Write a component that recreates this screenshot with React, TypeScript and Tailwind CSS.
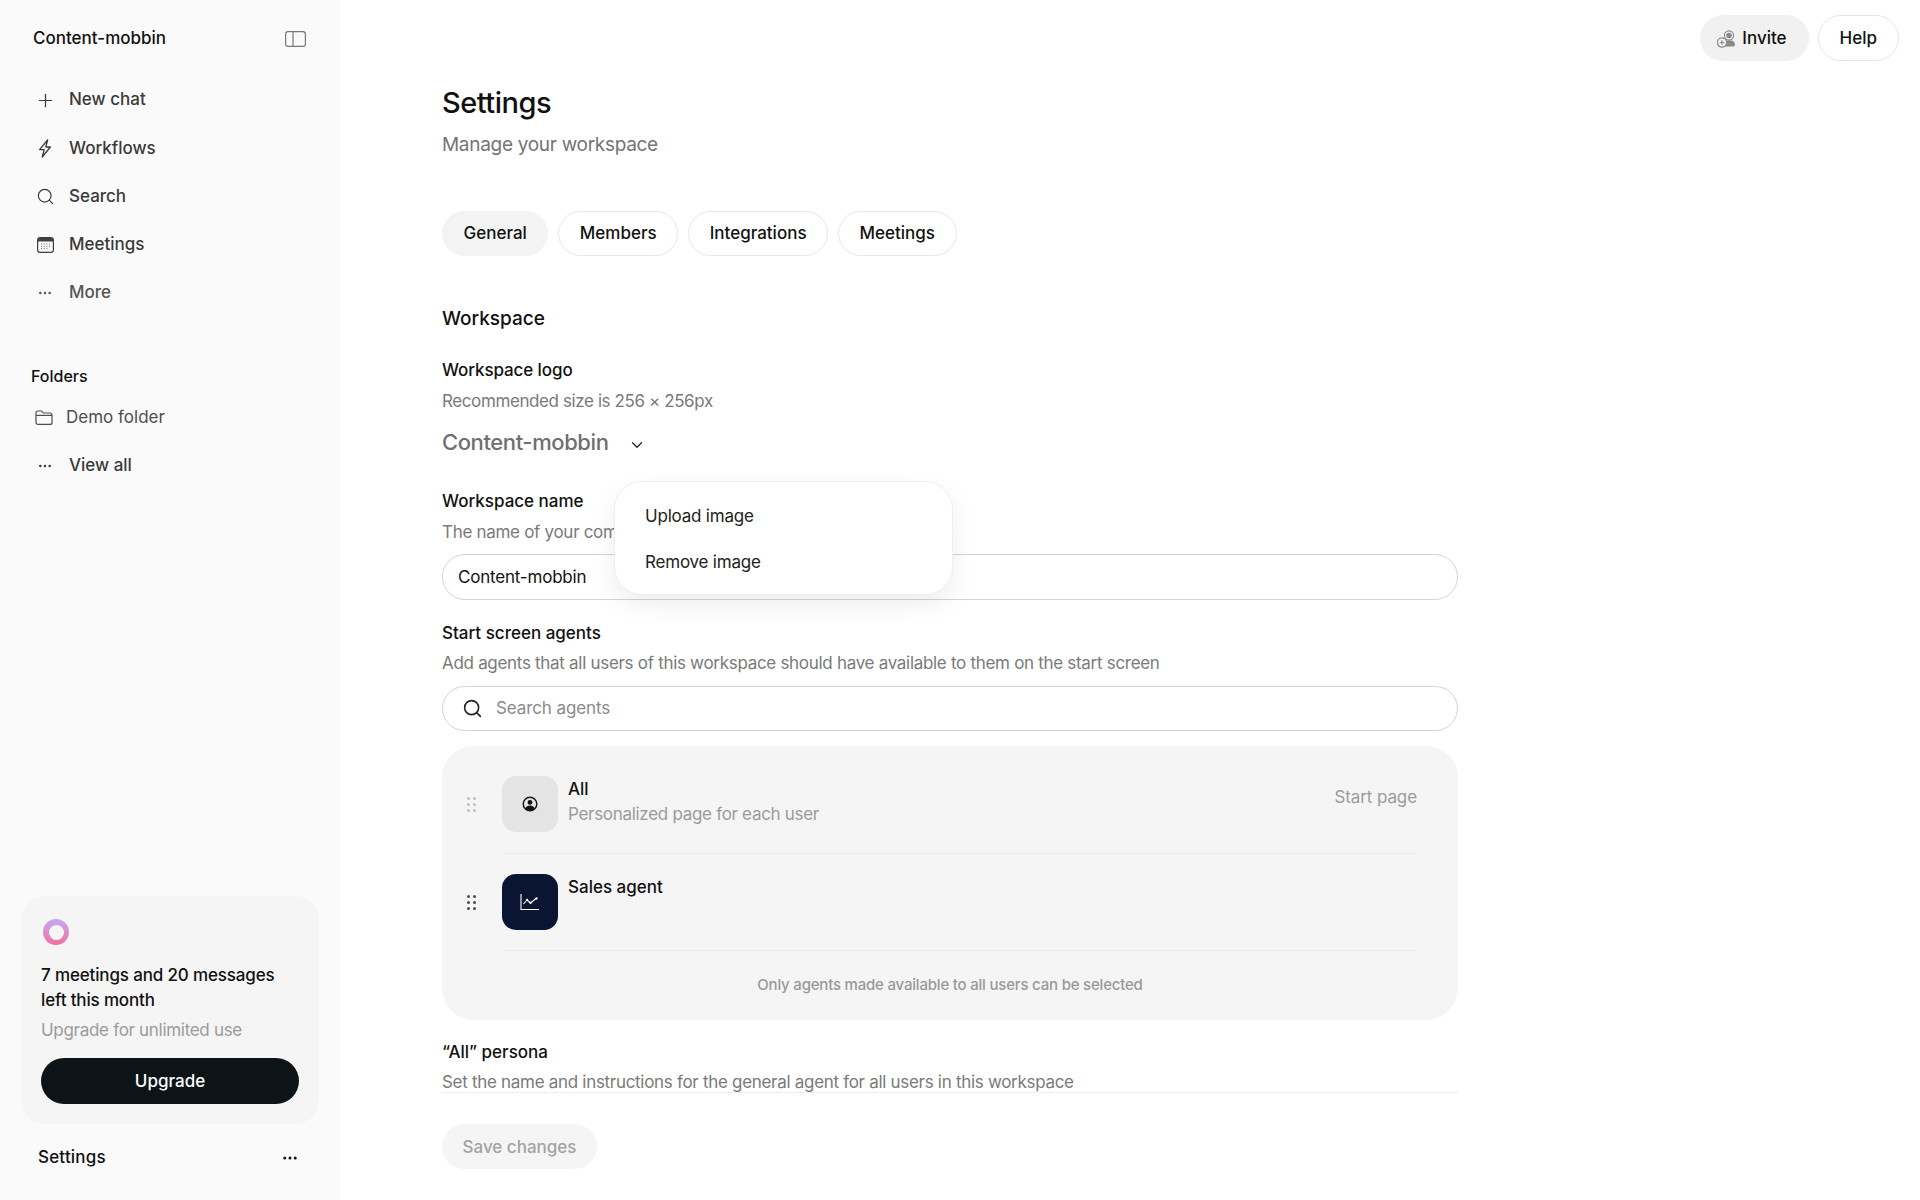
import { useState } from 'react';
import { ChevronDown, Ellipsis, Plus, Search } from 'lucide-react';

const tabs = ['General', 'Members', 'Integrations', 'Meetings'];

function PanelIcon() {
  return (
    <svg width="21" height="16" viewBox="0 0 21 16" fill="none" stroke="#777" strokeWidth="1.2">
      <rect x="0.6" y="0.6" width="19.8" height="14.8" rx="2.4" />
      <path d="M8 0.6v14.8" />
    </svg>
  );
}

function BoltIcon() {
  return (
    <svg width="14" height="19" viewBox="0 0 14 19" fill="none" stroke="#3a3a3a" strokeWidth="1.3" strokeLinejoin="round">
      <path d="M9.6 1 1.6 10.6h4.6L4.2 18l8.2-10H7.8z" />
    </svg>
  );
}

function FolderIcon() {
  return (
    <svg width="18" height="15" viewBox="0 0 18 15" fill="none" stroke="#4d4d4d" strokeWidth="1.2" strokeLinejoin="round">
      <path d="M1 3a2 2 0 0 1 2-2h3.6l1.6 2H15a2 2 0 0 1 2 2v7.4a2 2 0 0 1-2 2H3a2 2 0 0 1-2-2z" />
      <path d="M1 5.4h16" />
    </svg>
  );
}

function CalendarIcon() {
  return (
    <svg width="17" height="16" viewBox="0 0 17 16" fill="none">
      <rect x="0.6" y="0.6" width="15.8" height="14.8" rx="2.4" stroke="#3f3f3f" strokeWidth="1.2" />
      <path d="M1 3a2 2 0 0 1 2-2h11a2 2 0 0 1 2 2v1.6H1z" fill="#3f3f3f" />
      <path
        d="M4 7h1M6.7 7h1M9.4 7h1M12.1 7h1M4 9.3h1M6.7 9.3h1M9.4 9.3h1M12.1 9.3h1M4 11.6h1M6.7 11.6h1M9.4 11.6h1"
        stroke="#6b6b6b"
        strokeWidth="1"
      />
    </svg>
  );
}

function InviteIcon() {
  return (
    <svg width="20" height="18" viewBox="0 0 20 18" fill="none">
      <circle cx="12" cy="5.5" r="4.6" stroke="#8a8a8a" strokeWidth="1.1" />
      <circle cx="12" cy="5.5" r="2.8" fill="#8a8a8a" />
      <path d="M7 16c0-3.4 2.2-5.6 5-5.6h1.6c2.8 0 4.4 2 4.4 4.4 0 1.2-.8 1.8-2 1.8H8z" fill="#8a8a8a" />
      <circle cx="5" cy="12.5" r="4.6" fill="#f1f1f1" stroke="#8a8a8a" strokeWidth="1.2" />
      <path d="M5 10.2v4.6M2.7 12.5h4.6" stroke="#8a8a8a" strokeWidth="1.2" />
    </svg>
  );
}

function DragDots({ light }: { light?: boolean }) {
  return (
    <div className={`grid grid-cols-2 gap-x-[3px] gap-y-[3px] ${light ? 'opacity-25' : 'opacity-80'}`}>
      {[0, 1, 2, 3, 4, 5].map((i) => (
        <span key={i} className="w-[3px] h-[3px] rounded-full bg-[#222]" />
      ))}
    </div>
  );
}

function NavItem({ icon, label, muted }: { icon: React.ReactNode; label: string; muted?: boolean }) {
  return (
    <div className={`flex items-center h-[48.2px] pl-9 ${muted ? 'text-[#555]' : 'text-[#3a3a3a]'}`}>
      <span className="w-6 flex justify-center">{icon}</span>
      <span className="ml-3 text-[17px] font-medium">{label}</span>
    </div>
  );
}

export default function App() {
  const [activeTab] = useState('General');

  return (
    <div className="flex h-[1200px] overflow-hidden bg-white text-[#111] font-['Inter',sans-serif]">
      {/* Sidebar */}
      <aside className="w-[340px] shrink-0 bg-[#fafafa] flex flex-col">
        <div className="flex items-center justify-between pl-[33px] pr-[34px] pt-[27px] h-[50px]">
          <span className="text-[17px] font-medium">Content-mobbin</span>
          <PanelIcon />
        </div>
        <nav className="mt-[26px] -ml-[3px]">
          <NavItem icon={<Plus size={21} strokeWidth={1.4} />} label="New chat" />
          <NavItem icon={<BoltIcon />} label="Workflows" />
          <NavItem icon={<Search size={19} strokeWidth={1.5} />} label="Search" />
          <NavItem icon={<CalendarIcon />} label="Meetings" />
          <NavItem icon={<Ellipsis size={16} strokeWidth={1.8} />} label="More" muted />
        </nav>
        <div className="mt-[47px] pl-[31px] text-[16px] font-medium leading-6">Folders</div>
        <div className="flex items-center h-[48px] mt-[6px] pl-[35px] text-[#4d4d4d]">
          <FolderIcon />
          <span className="ml-[13px] text-[17px]">Demo folder</span>
        </div>
        <div className="-ml-[3px]">
          <NavItem icon={<Ellipsis size={16} strokeWidth={1.8} />} label="View all" />
        </div>

        <div className="mt-auto mx-[21px] w-[298px] h-[228px] rounded-[24px] bg-[#f5f5f5] px-[20px] pt-[23px]">
          <div className="w-[26px] h-[26px] rounded-full bg-linear-to-b from-[#c4a6f5] to-[#ee6fa0] flex items-center justify-center ml-[2px]">
            <div className="w-[15px] h-[15px] rounded-full bg-[#f5f5f5]" />
          </div>
          <p className="mt-[18px] text-[17px] leading-[25px] font-medium tracking-[-0.15px]">7 meetings and 20 messages left this month</p>
          <p className="mt-[4px] text-[17px] leading-[27px] tracking-[-0.3px] text-[#9b9b9b]">Upgrade for unlimited use</p>
          <button className="mt-[14px] w-[258px] h-[46px] pt-[1px] rounded-full bg-[#0d1417] text-white text-[17px] font-medium">
            Upgrade
          </button>
        </div>
        <div className="flex items-center justify-between pl-[38px] pr-[41px] pt-[2px] h-[66px] mb-[10px]">
          <span className="text-[17px] font-medium tracking-[0.2px]">Settings</span>
          <Ellipsis size={18} strokeWidth={2} />
        </div>
      </aside>

      {/* Main */}
      <main className="relative flex-1 pl-[102px]">
        <div className="absolute top-[15px] right-[21px] flex gap-[9px]">
          <button className="flex items-center gap-[5px] h-[46px] pl-[17px] pr-[22px] pt-[2px] rounded-full bg-[#f1f1f1] text-[17px] font-medium">
            <InviteIcon />
            Invite
          </button>
          <button className="h-[46px] px-[21px] pt-[2px] rounded-full border border-[#e6e6e6] bg-white text-[17px] font-medium">
            Help
          </button>
        </div>

        <div className="w-[1016px] pt-[84px]">
          <h1 className="text-[29px] leading-[38px] font-medium tracking-[-0.5px]">Settings</h1>
          <p className="mt-[9px] text-[19px] leading-[28px] tracking-[-0.3px] text-[#737373]">Manage your workspace</p>

          <div className="mt-[52px] flex gap-[10px]">
            {tabs.map((tab) => (
              <button
                key={tab}
                className={`h-[45px] pt-[1px] rounded-full text-[17px] font-medium ${
                  tab === activeTab ? 'px-[21.5px] bg-[#f3f3f3]' : 'px-[20.5px] border border-[#e8e8e8] bg-white'
                }`}
              >
                {tab}
              </button>
            ))}
          </div>

          <h2 className="mt-[49px] text-[19px] leading-[28px] font-medium">Workspace</h2>

          <div className="mt-[25px] text-[17px] leading-[24px] font-medium tracking-[-0.1px]">Workspace logo</div>
          <p className="mt-[7px] text-[17px] leading-[24px] tracking-[-0.4px] text-[#7a7a7a]">Recommended size is 256 × 256px</p>
          <div className="mt-[11px] flex items-center h-[36px] text-[#6f6f6f]">
            <span className="text-[22px] font-medium tracking-[-0.4px]">Content-mobbin</span>
            <ChevronDown size={18} strokeWidth={1.6} className="ml-[19px] mt-[6px] text-[#222]" />
          </div>

          <div className="mt-[29px] text-[17px] leading-[24px] font-medium">Workspace name</div>
          <p className="mt-[7px] text-[17px] leading-[24px] tracking-[-0.3px] text-[#7a7a7a]">The name of your company or organization</p>
          <div className="mt-[10px] h-[46px] rounded-full border border-[#d4d4d4] flex items-center pl-[15px] pt-[2px] text-[17px] tracking-[-0.2px]">
            Content-mobbin
          </div>

          <div className="mt-[21px] text-[17px] leading-[24px] font-medium">Start screen agents</div>
          <p className="mt-[6px] text-[17px] leading-[24px] tracking-[-0.3px] text-[#7a7a7a]">
            Add agents that all users of this workspace should have available to them on the start screen
          </p>
          <div className="mt-[11px] h-[45px] rounded-full border border-[#d4d4d4] flex items-center pl-[19px] text-[17px] tracking-[-0.1px] text-[#8a8a8a]">
            <Search size={21} strokeWidth={1.8} className="text-[#222]" />
            <span className="ml-[13px]">Search agents</span>
          </div>

          <div className="mt-[15px] h-[274px] rounded-[32px] bg-[#f5f5f5] pl-[24px] pr-[41px] pt-[30px]">
            <div className="flex items-start">
              <div className="w-[36px] h-[56px] flex items-center pl-[1px]">
                <DragDots light />
              </div>
              <div className="flex-1 flex items-start border-b border-[#ebebeb] h-[78px]">
                <div className="w-[56px] h-[56px] rounded-[14px] bg-[#e4e4e4] flex items-center justify-center">
                  <svg width="16" height="16" viewBox="0 0 16 16" fill="none">
                    <circle cx="8" cy="8" r="6.8" stroke="#111" strokeWidth="1.4" />
                    <circle cx="8" cy="6.4" r="2.4" fill="#111" />
                    <path d="M3.4 12.4c.8-1.8 2.6-2.8 4.6-2.8s3.8 1 4.6 2.8A6.6 6.6 0 0 1 8 14.4a6.6 6.6 0 0 1-4.6-2Z" fill="#111" />
                  </svg>
                </div>
                <div className="ml-[10px] flex-1">
                  <div className="text-[17px] leading-[26px] font-medium">All</div>
                  <div className="text-[17px] leading-[24px] tracking-[-0.3px] text-[#9b9b9b]">Personalized page for each user</div>
                </div>
                <span className="mt-[9px] text-[17px] leading-[24px] tracking-[-0.1px] text-[#9b9b9b]">Start page</span>
              </div>
            </div>
            <div className="flex items-start mt-[20px]">
              <div className="w-[36px] h-[56px] flex items-center pl-[1px]">
                <DragDots />
              </div>
              <div className="flex-1 flex items-start border-b border-[#ebebeb] h-[77px]">
                <div className="w-[56px] h-[56px] rounded-[14px] bg-[#0a1433] flex items-center justify-center">
                  <svg width="20" height="18" viewBox="0 0 20 18" fill="none" stroke="#ffffff" strokeWidth="1.1">
                    <path d="M1 1v15.5h18" />
                    <path d="M3.5 11 7 7l3.5 3L16 5.5" strokeLinejoin="round" />
                    <circle cx="7" cy="7" r="0.6" fill="#ffffff" />
                    <circle cx="10.5" cy="10" r="0.6" fill="#ffffff" />
                    <circle cx="16.5" cy="5.5" r="0.6" fill="#ffffff" />
                  </svg>
                </div>
                <div className="ml-[10px] text-[17px] leading-[26px] font-medium">Sales agent</div>
              </div>
            </div>
            <p className="mt-[24px] ml-[-24px] mr-[-41px] text-center text-[15px] leading-[20px] tracking-[-0.2px] font-medium text-[#999]">
              Only agents made available to all users can be selected
            </p>
          </div>

          <div className="mt-[20px] text-[17px] leading-[24px] font-medium">“All” persona</div>
          <p className="mt-[6px] h-[23px] border-b border-[#eeeeee] text-[17px] leading-[24px] tracking-[-0.3px] text-[#7a7a7a] overflow-hidden">
            Set the name and instructions for the general agent for all users in this workspace
          </p>
          <button className="mt-[31px] h-[45px] w-[155px] pt-[2px] rounded-full bg-[#f5f5f5] text-[17px] font-medium text-[#a3a3a3]">
            Save changes
          </button>
        </div>

        {/* Logo dropdown */}
        <div className="absolute left-[274px] top-[481px] w-[339px] h-[114px] rounded-[28px] border border-[#efefef] bg-white shadow-[0_10px_24px_rgba(0,0,0,0.07)] pl-[30px] pt-[12px] text-[17px] tracking-[-0.2px] text-[#222]">
          <div className="h-[46px] flex items-center">Upload image</div>
          <div className="h-[46px] flex items-center">Remove image</div>
        </div>
      </main>
    </div>
  );
}
